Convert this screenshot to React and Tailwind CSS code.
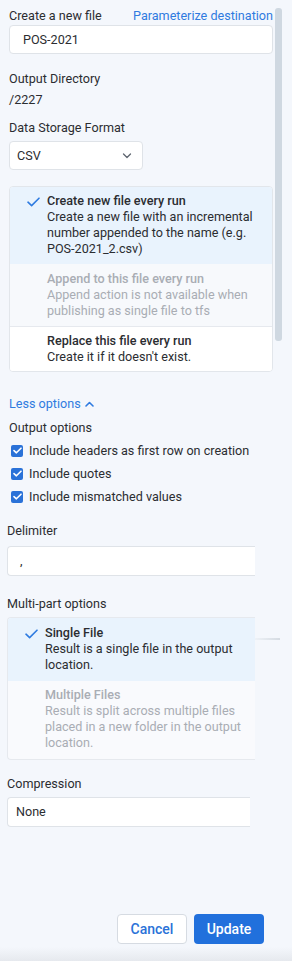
import React from "react";

const Check = ({ className = "" }) => (
  <svg width="13" height="10" viewBox="0 0 13 10" className={className}>
    <path d="M1 5.2 L4.6 8.6 L12 1.2" fill="none" stroke="#2f7be0" strokeWidth="1.6" strokeLinecap="round" strokeLinejoin="round" />
  </svg>
);

const Box = () => (
  <span className="w-[12px] h-[12px] rounded-[2px] bg-[#2a72d8] flex items-center justify-center shrink-0">
    <svg width="9" height="7" viewBox="0 0 9 7">
      <path d="M1 3.6 L3.4 5.8 L8 1.2" fill="none" stroke="white" strokeWidth="1.6" strokeLinecap="round" strokeLinejoin="round" />
    </svg>
  </span>
);

export default function App() {
  return (
    <div
      className="relative w-[292px] h-[961px] overflow-hidden bg-[#f4f7fc] text-[12.6px] leading-[16px] text-[#2b2d31]"
      style={{ fontFamily: "Roboto, 'Liberation Sans', sans-serif" }}
    >
      {/* scrollbar */}
      <div className="absolute left-[275px] top-[8px] w-[7px] h-[333px] rounded-[3px] bg-[#cfd8e1]" />

      <div className="ml-[9px] w-[264px] pt-[8px] flex flex-col">
        <div className="flex justify-between">
          <span>Create a new file</span>
          <span className="text-[#2f7be0]">Parameterize destination</span>
        </div>
        <div className="mt-[1px] h-[29px] rounded-[4px] border border-[#dfe3e8] bg-white flex items-center pl-[13px]">
          POS-2021
        </div>
        <div className="mt-[17px]">Output Directory</div>
        <div className="mt-[5px]">/2227</div>
        <div className="mt-[12px]">Data Storage Format</div>
        <div className="mt-[5px] w-[134px] h-[29px] rounded-[4px] border border-[#dfe3e8] bg-white flex items-center justify-between pl-[7px] pr-[10px]">
          <span>CSV</span>
          <svg width="10" height="6" viewBox="0 0 10 6">
            <path d="M1.5 1 L5 4.5 L8.5 1" fill="none" stroke="#5f6670" strokeWidth="1.3" strokeLinecap="round" strokeLinejoin="round" />
          </svg>
        </div>

        <div className="mt-[16px] rounded-[4px] border border-[#e2e6eb] overflow-hidden bg-white">
          <div className="relative bg-[#e9f3fd] pl-[37px] pr-[6px] pt-[6px] pb-[7px]">
            <Check className="absolute left-[17px] top-[10px]" />
            <div className="font-medium">Create new file every run</div>
            <div>Create a new file with an incremental number appended to the name (e.g. POS-2021_2.csv)</div>
          </div>
          <div className="bg-[#f7f9fc] pl-[37px] pr-[6px] pt-[7px] pb-[7px] text-[#a9adb4] border-b border-[#e6e9ee]">
            <div className="font-medium">Append to this file every run</div>
            <div>Append action is not available when publishing as single file to tfs</div>
          </div>
          <div className="bg-white pl-[37px] pr-[6px] pt-[6px] pb-[6px]">
            <div className="font-medium">Replace this file every run</div>
            <div>Create it if it doesn't exist.</div>
          </div>
        </div>

        <div className="mt-[24px] flex items-center gap-[4px] text-[#2f7be0]">
          <span>Less options</span>
          <svg width="9" height="6" viewBox="0 0 9 6">
            <path d="M1 5 L4.5 1.5 L8 5" fill="none" stroke="#2f7be0" strokeWidth="1.6" strokeLinecap="round" strokeLinejoin="round" />
          </svg>
        </div>
        <div className="mt-[8px]">Output options</div>
        <div className="mt-[3px] flex flex-col">
          {["Include headers as first row on creation", "Include quotes", "Include mismatched values"].map((t) => (
            <div key={t} className="h-[23px] flex items-center gap-[6px] pl-[2px]">
              <Box />
              <span>{t}</span>
            </div>
          ))}
        </div>
      </div>

      <div className="ml-[7px] w-[248px] flex flex-col">
        <div className="mt-[15px]">Delimiter</div>
        <div className="mt-[7px] h-[30px] rounded-l-[4px] border border-r-0 border-[#dfe3e8] bg-white flex items-center pl-[12px]">
          ,
        </div>
        <div className="mt-[20px]">Multi-part options</div>
        <div className="mt-[5px] rounded-l-[4px] border border-r-0 border-[#e6e9ee] overflow-hidden bg-[#f9fafd]">
          <div className="relative bg-[#e9f3fd] pl-[37px] pr-[6px] pt-[7px] pb-[8px]">
            <Check className="absolute left-[17px] top-[11px]" />
            <div className="font-medium">Single File</div>
            <div>Result is a single file in the output location.</div>
          </div>
          <div className="pl-[37px] pr-[6px] pt-[6px] pb-[8px] text-[#a9adb4]">
            <div className="font-medium">Multiple Files</div>
            <div>Result is split across multiple files placed in a new folder in the output location.</div>
          </div>
        </div>
        <div className="mt-[16px]">Compression</div>
        <div className="mt-[5px] w-[243px] h-[30px] rounded-l-[4px] border border-r-0 border-[#dfe3e8] bg-white flex items-center pl-[8px]">
          None
        </div>
      </div>

      <div className="absolute left-[255px] top-[638px] w-[25px] h-[2px] bg-gradient-to-r from-[#eef2f7] to-[#d5dbe2]" />

      <div className="mt-[87px] flex justify-end gap-[7px] pr-[28px]">
        <button className="w-[70px] h-[30px] rounded-[4px] border border-[#d6dbe2] bg-white text-[#2a72d8] text-[14px] font-medium">
          Cancel
        </button>
        <button className="w-[70px] h-[30px] rounded-[4px] bg-[#2170dc] text-white text-[14px] font-medium">
          Update
        </button>
      </div>

      <div className="absolute left-0 right-0 bottom-0 h-[14px] bg-gradient-to-b from-[#f4f7fc] to-[#e6e9ee]" />
    </div>
  );
}
